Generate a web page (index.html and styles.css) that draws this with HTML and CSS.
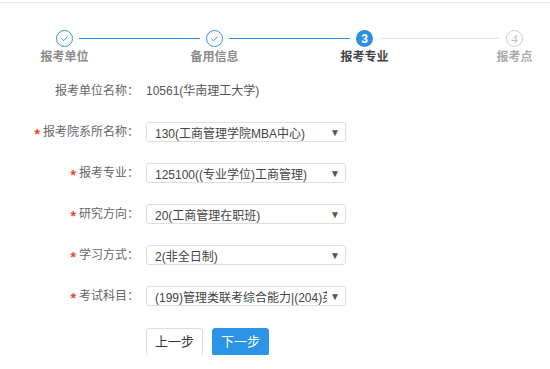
FILE: index.html
```html
<!DOCTYPE html>
<html lang="zh-CN">
<head>
  <meta charset="UTF-8" />
  <meta name="viewport" content="width=device-width, initial-scale=1.0"/>
  <title>报考专业</title>
  <link rel="stylesheet" href="styles.css">
</head>
<body>

<div class="topbar"></div>

<div class="steps">
  <div class="dot done">
    <svg width="17" height="17" viewBox="0 0 17 17"><polyline points="5.5,8.8 7.6,10.8 11.4,6.8" fill="none" stroke="#2b8fe4" stroke-width="1"/></svg>
  </div>
  <div class="line"></div>
  <div class="dot done">
    <svg width="17" height="17" viewBox="0 0 17 17"><polyline points="5.5,8.8 7.6,10.8 11.4,6.8" fill="none" stroke="#2b8fe4" stroke-width="1"/></svg>
  </div>
  <div class="line"></div>
  <div class="dot current">3</div>
  <div class="line todo"></div>
  <div class="dot todo">4</div>

  <div class="step-name">报考单位</div>
  <div></div>
  <div class="step-name">备用信息</div>
  <div></div>
  <div class="step-name current">报考专业</div>
  <div></div>
  <div class="step-name todo">报考点</div>
</div>

<div class="form">
  <div class="label">报考单位名称：</div>
  <div class="value">10561(华南理工大学)</div>

  <div class="label"><span class="star">*</span>报考院系所名称：</div>
  <div class="select"><span class="text">130(工商管理学院MBA中心)</span><span class="arrow">▼</span></div>

  <div class="label"><span class="star">*</span>报考专业：</div>
  <div class="select"><span class="text">125100((专业学位)工商管理)</span><span class="arrow">▼</span></div>

  <div class="label"><span class="star">*</span>研究方向：</div>
  <div class="select"><span class="text">20(工商管理在职班)</span><span class="arrow">▼</span></div>

  <div class="label"><span class="star">*</span>学习方式：</div>
  <div class="select"><span class="text">2(非全日制)</span><span class="arrow">▼</span></div>

  <div class="label"><span class="star">*</span>考试科目：</div>
  <div class="select"><span class="text">(199)管理类联考综合能力|(204)英语二</span><span class="arrow">▼</span></div>

  <div></div>
  <div class="buttons">
    <button class="btn">上一步</button>
    <button class="btn primary">下一步</button>
  </div>
</div>

</body>
</html>
```

FILE: styles.css
```css
* {
  box-sizing: border-box;
}

body {
  margin: 0;
  background: #fff;
  font-family: "Liberation Sans", "Noto Sans CJK SC", sans-serif;
  font-size: 12px;
  color: #555;
}

.topbar {
  height: 3px;
  border-bottom: 1px solid #e8e8e8;
}

/* step bar */
.steps {
  display: grid;
  grid-template-columns: 17px 133px 17px 133px 17px 133px 17px;
  grid-template-rows: 17px 14px;
  row-gap: 3px;
  padding-left: 56px;
  margin-top: 27px;
}

.dot {
  width: 17px;
  height: 17px;
  border-radius: 50%;
  display: flex;
  align-items: center;
  justify-content: center;
  font-size: 12px;
  line-height: 1;
}

.dot.done {
  border: 1px solid #2b8fe4;
}

.dot.done svg {
  margin: -1px;
}

.dot.current {
  background: #2b8fe4;
  color: #fff;
  font-weight: bold;
}

.dot.todo {
  border: 1px solid #ccc;
  color: #bbb;
  font-family: "Liberation Serif", serif;
  font-size: 13px;
}

.line {
  align-self: center;
  height: 1px;
  margin: 0 6px;
  background: #2b8fe4;
}

.line.todo {
  background: #e6e6e6;
}

.step-name {
  margin: 0 -40px;
  text-align: center;
  font-size: 12px;
  line-height: 14px;
  font-weight: bold;
  color: #8a8a8a;
}

.step-name.current {
  color: #444;
}

.step-name.todo {
  color: #aaa;
}

/* form */
.form {
  display: grid;
  grid-template-columns: 139px 200px;
  grid-template-rows: repeat(6, 20px) 28px;
  column-gap: 7px;
  row-gap: 21px;
  margin-top: 17px;
}

.label {
  text-align: right;
  line-height: 20px;
  color: #666;
  white-space: nowrap;
}

.star {
  color: #e8452c;
  font-size: 14px;
  font-weight: bold;
  margin-right: 3px;
  vertical-align: -3px;
}

.value {
  line-height: 20px;
  color: #555;
}

.select {
  display: flex;
  align-items: center;
  height: 20px;
  border: 1px solid #ddd;
  border-radius: 3px;
  padding: 0 5px 0 8px;
  color: #444;
}

.select .text {
  flex: 1;
  overflow: hidden;
  white-space: nowrap;
}

.select .arrow {
  font-size: 10px;
  color: #555;
  margin-left: 3px;
}

.buttons {
  display: flex;
  gap: 9px;
  margin-top: 1px;
  height: 28px;
}

.btn {
  width: 57px;
  height: 28px;
  border: 1px solid #ddd;
  border-radius: 3px;
  background: #fff;
  color: #333;
  font-family: "Liberation Sans", "Noto Sans CJK SC", sans-serif;
  font-size: 13px;
  line-height: 26px;
  padding: 0;
}

.btn.primary {
  background: #2b94e6;
  border-color: #2b94e6;
  color: #fff;
}
```
